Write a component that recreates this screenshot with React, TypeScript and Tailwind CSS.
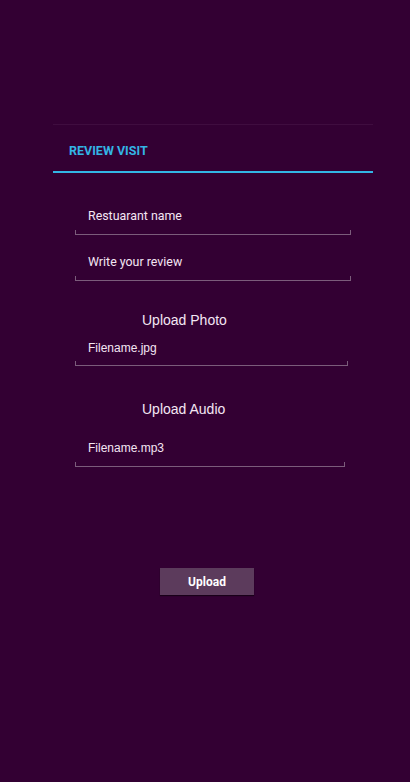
import React from "react";

function Field({
  label,
  width,
  textMb,
  arial,
}: {
  label: string;
  width: string;
  textMb: string;
  arial?: boolean;
}) {
  return (
    <div className="flex flex-col">
      <div
        className={`pl-[88px] leading-[16px] text-[#f3e6f3] ${arial ? "text-[12px]" : "text-[12.4px]"} ${textMb}`}
        style={{ fontFamily: arial ? "'Liberation Sans', Arial, sans-serif" : "Roboto, sans-serif" }}
      >
        {label}
      </div>
      <div className={`ml-[75px] h-[5px] border-x border-b border-[#7b5c7b] ${width}`} />
    </div>
  );
}

export default function App() {
  return (
    <div className="w-[410px] h-[782px] bg-[#330033] flex flex-col" style={{ fontFamily: "Roboto, sans-serif" }}>
      <div className="mt-[124px] mx-[53px] w-[320px] h-px bg-[#3f0d3f]" />
      <div className="mx-[53px] w-[320px] pt-[18px] pl-[16px] text-[12.5px] leading-[15px] font-bold text-[#33b5e5]">
        REVIEW VISIT
      </div>
      <div className="mx-[53px] mt-[13px] w-[320px] h-[2px] bg-[#33b5e5]" />
      <div className="mt-[35px]">
        <Field label="Restuarant name" width="w-[276px]" textMb="mb-[6px]" />
      </div>
      <div className="mt-[19px]">
        <Field label="Write your review" width="w-[276px]" textMb="mb-[6px]" />
      </div>
      <div
        className="mt-[30px] pl-[142px] text-[14px] leading-[18px] text-[#f3e6f3]"
        style={{ fontFamily: "'Liberation Sans', Arial, sans-serif" }}
      >
        Upload Photo
      </div>
      <div className="mt-[11px]">
        <Field label="Filename.jpg" width="w-[273px]" textMb="mb-[5px]" arial />
      </div>
      <div
        className="mt-[34px] pl-[142px] text-[14px] leading-[18px] text-[#f3e6f3]"
        style={{ fontFamily: "'Liberation Sans', Arial, sans-serif" }}
      >
        Upload Audio
      </div>
      <div className="mt-[22px]">
        <Field label="Filename.mp3" width="w-[270px]" textMb="mb-[6px]" arial />
      </div>
      <div className="mt-[101px] ml-[160px] w-[94px] h-[27px] bg-[#5c3b5c] shadow-[0_1px_1px_rgba(0,0,0,0.5)] flex items-center justify-center text-[12px] font-bold text-white">
        Upload
      </div>
    </div>
  );
}
